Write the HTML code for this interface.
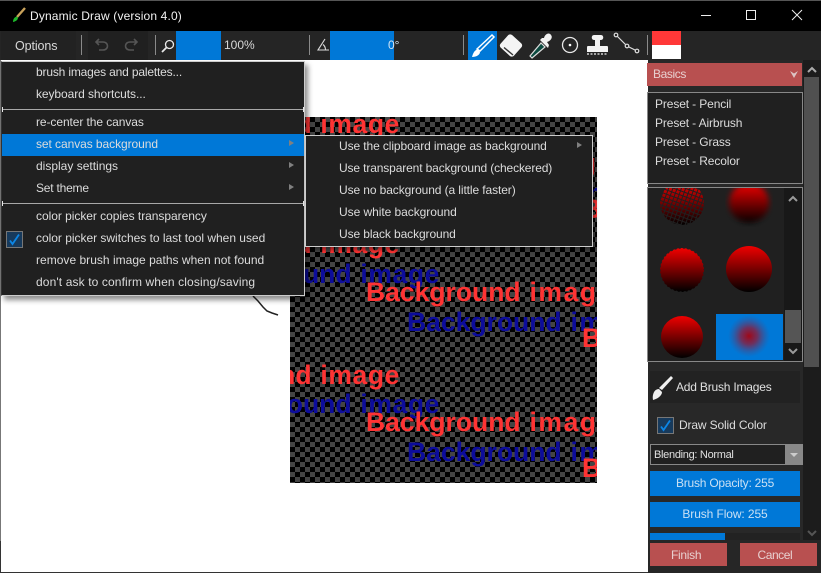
<!DOCTYPE html>
<html><head><meta charset="utf-8">
<style>
*{box-sizing:border-box}
html,body{margin:0;padding:0;width:821px;height:573px;overflow:hidden;background:#fff}
body{position:relative;font-family:"Liberation Sans",sans-serif;font-size:12px;color:#d8d8d8}
.a{position:absolute}
.t{position:absolute;white-space:nowrap;line-height:16px;height:16px}
.m{font-size:12px;color:#dcdcdc;letter-spacing:-.08px}
.s{letter-spacing:-.1px}
.p{letter-spacing:-.12px}
.big{position:absolute;white-space:nowrap;font-weight:bold;font-size:26.5px;line-height:30px;height:30px;word-spacing:1.5px}
.big i{font-style:normal;letter-spacing:.6px}
.big.w i{letter-spacing:1.6px}
.r{color:#ff3333}.b{color:#0c0c9c}
.arr{position:absolute;width:0;height:0;border-left:5px solid #808080;border-top:3.5px solid transparent;border-bottom:3.5px solid transparent}
.sep{position:absolute;width:1px;height:20px;background:#8a8a8a;top:35px}
.tick{position:absolute;width:1px;height:5px;background:#e8e8e8}
svg{position:absolute;overflow:visible}
</style></head><body>
<div class="a" style="left:0;top:0;width:821px;height:31px;background:#000"></div>
<div class="a" style="left:0;top:0;width:821px;height:1px;background:#555"></div>
<svg style="left:10px;top:7px" width="16" height="16" viewBox="0 0 16 16"><path d="M7 10L15 1" stroke="#c9a25a" stroke-width="2.4"/><path d="M3 15C3 12 5 9 7.5 10C9 12 6 14.5 3 15Z" fill="#1db92a"/></svg>
<div class="t" style="left:30px;top:8px;color:#f2f2f2;font-size:12px;letter-spacing:.15px">Dynamic Draw (version 4.0)</div>
<svg style="left:701px;top:10px" width="110" height="12" viewBox="0 0 110 12"><path d="M0 5.5H10" stroke="#eee" stroke-width="1"/><rect x="45.500" y=".5" width="9" height="9" fill="none" stroke="#eee"/><path d="M91 0L101 10M101 0L91 10" stroke="#eee"/></svg>

<!-- toolbar -->
<div class="a" style="left:0;top:31px;width:821px;height:29px;background:#252525"></div>
<div class="a" style="left:1px;top:31px;width:75px;height:29px;background:#222"></div>
<div class="t" style="left:15px;top:38px;color:#d8d8d8;font-size:12.5px;letter-spacing:-.1px">Options</div>
<div class="sep" style="left:81px"></div>
<div class="sep" style="left:155px"></div>
<div class="a" style="left:88px;top:31px;width:60px;height:29px;background:#202020"></div>
<svg style="left:95px;top:38px" width="45" height="14" viewBox="0 0 45 14" fill="none" stroke="#555" stroke-width="1.6"><path d="M1 4H8C14 4 14 12 8 12H4M4 1L1 4L4 7"/><path d="M42 4H35C29 4 29 12 35 12H39M39 1L42 4L39 7"/></svg>
<svg style="left:161px;top:39px" width="14" height="14" viewBox="0 0 14 14" fill="none" stroke="#e8e8e8" stroke-width="1.3"><circle cx="8.5" cy="5.5" r="4"/><path d="M5.5 8.5L1 13" stroke-width="1.8"/></svg>
<div class="a" style="left:176px;top:31px;width:45px;height:29px;background:#0078d7"></div>
<div class="t" style="left:224px;top:37px;color:#d8d8d8">100%</div>
<div class="sep" style="left:309px"></div>
<svg style="left:316px;top:38px" width="14" height="14" viewBox="0 0 14 14" fill="none" stroke="#ddd" stroke-width="1.1"><path d="M9 1L2 12H13M7 6.5C9 8 9.5 10 9.5 12"/></svg>
<div class="a" style="left:330px;top:31px;width:64px;height:29px;background:#0078d7"></div>
<div class="t" style="left:388px;top:37px;color:#cfe4f5">0°</div>
<div class="sep" style="left:463px"></div>
<div class="a" style="left:468px;top:31px;width:29px;height:29px;background:#0078d7"></div>
<svg style="left:468px;top:31px" width="29" height="29" viewBox="0 0 29 29"><path d="M9 18L24 4L26 6L12 20Z" fill="none" stroke="#fff" stroke-width="1.5"/><path d="M4 26C5 22 7 18 10 19L12 21C12 24 8 26 4 26Z" fill="#fff"/></svg>
<svg style="left:498px;top:31px" width="28" height="29" viewBox="0 0 28 29"><rect x="4" y="6" width="18" height="17" rx="3" fill="#f4f4f4" transform="rotate(42 13 14.5)"/><path d="M6 16.500L15 24" stroke="#333" stroke-width="1.400"/></svg>
<svg style="left:528px;top:31px" width="26" height="29" viewBox="0 0 26 29"><path d="M4 27L2 25L13 12L17 16Z" fill="#0c4a40" stroke="#ddd" stroke-width="1.2"/><path d="M12 9L20 17L21 14L19 11C23 10 25 6 23 4C21 1 17 3 16 7L14 7Z" fill="#f2f2f2"/></svg>
<svg style="left:558px;top:33px" width="24" height="24" viewBox="0 0 24 24"><circle cx="12" cy="12" r="7.500" fill="none" stroke="#e8e8e8" stroke-width="1.3"/><circle cx="12" cy="12" r="1.300" fill="#fff"/></svg>
<svg style="left:586px;top:33px" width="24" height="24" viewBox="0 0 24 24" fill="#f4f4f4"><path d="M8 2H15C18 2 18 7 15 7H14V13H21C22 13 22 14 22 15V19H1V15C1 14 1 13 2 13H9V7H8C5 7 5 2 8 2Z"/><path d="M1 21H22" stroke="#f4f4f4" stroke-width="1.200" stroke-dasharray="2 1.500"/></svg>
<svg style="left:613px;top:32px" width="28" height="22" viewBox="0 0 28 22" fill="none" stroke="#ddd" stroke-width="1.200"><path d="M3 3L14 14L24 19"/><circle cx="3" cy="3" r="1.800" fill="#252525"/><circle cx="14" cy="14" r="1.800" fill="#252525"/><circle cx="24" cy="19" r="1.800" fill="#252525"/></svg>
<div class="sep" style="left:647px"></div>
<div class="a" style="left:652px;top:31px;width:29px;height:14px;background:#ff3838"></div>
<div class="a" style="left:652px;top:45px;width:29px;height:14px;background:#fff"></div>

<!-- canvas -->
<div class="a" style="left:0;top:60px;width:648px;height:513px;background:#fff;border-left:1px solid #777;border-bottom:1px solid #333"></div>
<div class="a" style="left:0;top:541px;width:1px;height:32px;background:#333"></div>
<div class="a" id="c" style="left:290px;top:117px;width:307px;height:366px;overflow:hidden;background-color:#000;background-image:linear-gradient(45deg,#444 25%,transparent 25%,transparent 75%,#444 75%),linear-gradient(45deg,#444 25%,transparent 25%,transparent 75%,#444 75%);background-size:10px 10px;background-position:0 0,5px 5px">
<div class="big r" style="right:197px;top:-8px">Background <i>image</i></div>
<div class="big r w" style="left:76px;top:31px">Background <i>image</i></div>
<div class="big b w" style="left:117px;top:61px">Background <i>image</i></div>
<div class="big r" style="left:292px;top:77px">Background <i>image</i></div>
<div class="big r" style="right:197px;top:112px">Background <i>image</i></div>
<div class="big b" style="right:157px;top:142px">Background <i>image</i></div>
<div class="big r w" style="left:76px;top:160px">Background <i>image</i></div>
<div class="big b w" style="left:117px;top:190px">Background <i>image</i></div>
<div class="big r" style="left:292px;top:206px">Background <i>image</i></div>
<div class="big r" style="right:197px;top:243px">Background <i>image</i></div>
<div class="big b" style="right:157px;top:272px">Background <i>image</i></div>
<div class="big r w" style="left:76px;top:290px">Background <i>image</i></div>
<div class="big b w" style="left:117px;top:320px">Background <i>image</i></div>
<div class="big r" style="left:292px;top:336px">Background <i>image</i></div>
</div>
<svg style="left:250px;top:294px" width="32" height="24" viewBox="0 0 32 24"><path d="M3 2L8 7L13 13L17 17L22 19L28 21" fill="none" stroke="#222" stroke-width="1.500"/></svg>

<!-- menu -->
<div class="a" style="left:1px;top:61px;width:304px;height:235px;background:#202020;border:1px solid #ccc;border-left:1px solid #333;box-shadow:3px 4px 5px rgba(0,0,0,.45)"></div>
<div class="a" style="left:2px;top:109px;width:302px;height:1px;background:#a8a8a8"></div>
<div class="a" style="left:2px;top:203px;width:302px;height:1px;background:#a8a8a8"></div>
<div class="tick" style="left:2px;top:107px"></div><div class="tick" style="left:303px;top:107px"></div>
<div class="tick" style="left:2px;top:201px"></div><div class="tick" style="left:303px;top:201px"></div>
<div class="a" style="left:2px;top:134px;width:302px;height:22px;background:#0078d7"></div>
<div class="t m" style="left:36px;top:64px;letter-spacing:-.17px">brush images and palettes...</div>
<div class="t m" style="left:36px;top:86px">keyboard shortcuts...</div>
<div class="t m" style="left:36px;top:114px">re-center the canvas</div>
<div class="t m" style="left:36px;top:136px;letter-spacing:-.07px">set canvas background</div>
<div class="t m" style="left:36px;top:158px;letter-spacing:0">display settings</div>
<div class="t m" style="left:36px;top:180px;letter-spacing:-.21px">Set theme</div>
<div class="t m" style="left:36px;top:208px;letter-spacing:-.04px">color picker copies transparency</div>
<div class="t m" style="left:36px;top:230px;letter-spacing:-.02px">color picker switches to last tool when used</div>
<div class="t m" style="left:36px;top:252px;letter-spacing:.02px">remove brush image paths when not found</div>
<div class="t m" style="left:36px;top:274px;letter-spacing:.12px">don't ask to confirm when closing/saving</div>
<div class="arr" style="left:289px;top:140px"></div>
<div class="arr" style="left:289px;top:162px"></div>
<div class="arr" style="left:289px;top:184px"></div>
<div class="a" style="left:6px;top:231px;width:17px;height:17px;background:#173a5c;border:1px solid #777"></div>
<svg style="left:6px;top:231px" width="17" height="17" viewBox="0 0 17 17"><path d="M4 9.500L6.500 13L13 3.500" fill="none" stroke="#0c86e6" stroke-width="1.800"/></svg>

<!-- submenu -->
<div class="a" style="left:305px;top:135px;width:288px;height:112px;background:#202020;border:1px solid #ccc;box-shadow:2px 3px 4px rgba(0,0,0,.4)"></div>
<div class="t m s" style="left:339px;top:138px">Use the clipboard image as background</div>
<div class="t m s" style="left:339px;top:160px;letter-spacing:-.13px">Use transparent background (checkered)</div>
<div class="t m s" style="left:339px;top:182px">Use no background (a little faster)</div>
<div class="t m s" style="left:339px;top:204px;letter-spacing:-.05px">Use white background</div>
<div class="t m s" style="left:339px;top:226px">Use black background</div>
<div class="arr" style="left:577px;top:142px"></div>

<!-- right panel -->
<div class="a" style="left:648px;top:60px;width:173px;height:513px;background:#282828"></div>
<div class="a" style="left:803px;top:60px;width:18px;height:480px;background:#1c1c1c"></div>
<div class="a" style="left:804px;top:77px;width:15px;height:290px;background:#505050"></div>
<svg style="left:805px;top:62px" width="14" height="480" viewBox="0 0 14 480" fill="none" stroke="#aaa" stroke-width="2"><path d="M3 10L7 6L11 10"/><path d="M3 469L7 473L11 469" stroke="#555"/></svg>

<div class="a" style="left:647px;top:63px;width:155px;height:23px;background:#b85050"></div>
<div class="t" style="left:653px;top:66px;color:#e8d0d0;letter-spacing:-.4px">Basics</div>
<svg style="left:788px;top:70px" width="12" height="10" viewBox="0 0 12 10"><path d="M2 1L6 3.500L10 1L6 8Z" fill="#ddc4c4"/></svg>

<div class="a" style="left:647px;top:92px;width:156px;height:92px;background:#202020;border:1px solid #888"></div>
<div class="t m p" style="left:655px;top:96px">Preset - Pencil</div>
<div class="t m p" style="left:655px;top:115px">Preset - Airbrush</div>
<div class="t m p" style="left:655px;top:134px">Preset - Grass</div>
<div class="t m p" style="left:655px;top:153px">Preset - Recolor</div>

<div class="a" style="left:647px;top:187px;width:156px;height:175px;background:#202020;border:1px solid #888;overflow:hidden">
 <div class="a" style="left:136px;top:0;width:18px;height:173px;background:#181818"></div>
 <div class="a" style="left:137px;top:122px;width:16px;height:33px;background:#555"></div>
 <svg style="left:136px;top:0" width="18" height="173" viewBox="0 0 18 173" fill="none" stroke="#999" stroke-width="2"><path d="M5 13L9 9L13 13"/><path d="M5 161L9 165L13 161"/></svg>
 <div class="a" style="left:68px;top:126px;width:67px;height:46px;background:#0078d7"></div>
 <svg style="left:0;top:0" width="136" height="173" viewBox="0 0 136 173">
  <defs>
   <linearGradient id="g" x1="0" y1="0" x2="0" y2="1"><stop offset="0" stop-color="#f00000"/><stop offset="1" stop-color="#000"/></linearGradient>
   <radialGradient id="f"><stop offset="0" stop-color="#a00818"/><stop offset=".4" stop-color="#7a2850" stop-opacity=".9"/><stop offset="1" stop-color="#405090" stop-opacity="0"/></radialGradient>
   <pattern id="dots" width="4" height="4" patternUnits="userSpaceOnUse" patternTransform="rotate(20)"><rect x="0" y="0" width="3" height="3" fill="#fff"/></pattern>
   <mask id="dm"><circle cx="34" cy="15" r="22" fill="url(#dots)"/></mask>
   <filter id="bl"><feGaussianBlur stdDeviation="3"/></filter>
  </defs>
  <circle cx="34" cy="15" r="22" fill="url(#g)" mask="url(#dm)"/>
  <circle cx="101" cy="15" r="20" fill="url(#g)" filter="url(#bl)"/>
  <circle cx="34" cy="82" r="21.500" fill="url(#g)" stroke="url(#g)" stroke-dasharray="2 2" stroke-width="1"/>
  <circle cx="101" cy="81" r="23" fill="url(#g)"/>
  <circle cx="34" cy="149" r="21" fill="url(#g)"/>
  <circle cx="101" cy="148" r="21" fill="url(#f)"/>
 </svg>
</div>

<div class="a" style="left:650px;top:371px;width:150px;height:32px;background:#222"></div>
<svg style="left:651px;top:375px" width="24" height="26" viewBox="0 0 24 26"><path d="M20 1L22 3L11 15L8 13Z" fill="#f0f0f0"/><path d="M2 25C1 20 3 14 8 14L11 17C11 21 6 24 2 25Z" fill="#f0f0f0"/></svg>
<div class="t" style="left:676px;top:379px;color:#e0e0e0;font-size:12px;letter-spacing:-.2px">Add Brush Images</div>
<div class="a" style="left:657px;top:417px;width:17px;height:17px;background:#173a5c;border:1px solid #777"></div>
<svg style="left:657px;top:417px" width="17" height="17" viewBox="0 0 17 17"><path d="M4 9.500L6.500 13L13 3.500" fill="none" stroke="#0c86e6" stroke-width="1.800"/></svg>
<div class="t" style="left:679px;top:417px;color:#dcdcdc;font-size:12px;letter-spacing:-.14px">Draw Solid Color</div>
<div class="a" style="left:650px;top:444px;width:153px;height:21px;background:#202020;border:1px solid #888"></div>
<div class="a" style="left:785px;top:444px;width:18px;height:21px;background:#888"></div>
<div class="a" style="left:790px;top:453px;width:0;height:0;border-top:4px solid #ccc;border-left:4px solid transparent;border-right:4px solid transparent"></div>
<div class="t" style="left:654px;top:447px;color:#e0e0e0;font-size:11px;letter-spacing:-.3px">Blending: Normal</div>
<div class="a" style="left:650px;top:471px;width:150px;height:25px;background:#0078d7"></div>
<div class="t" style="left:650px;width:150px;text-align:center;top:475px;color:#c8e0f4;font-size:12px;letter-spacing:-.22px">Brush Opacity: 255</div>
<div class="a" style="left:650px;top:502px;width:150px;height:25px;background:#0078d7"></div>
<div class="t" style="left:650px;width:150px;text-align:center;top:506px;color:#c8e0f4;font-size:12px;letter-spacing:-.1px">Brush Flow: 255</div>
<div class="a" style="left:650px;top:533px;width:150px;height:7px;background:#222"></div>
<div class="a" style="left:650px;top:533px;width:75px;height:7px;background:#0078d7"></div>
<div class="a" style="left:648px;top:540px;width:173px;height:33px;background:#262626"></div>
<div class="a" style="left:650px;top:543px;width:77px;height:23px;background:#b85050"></div>
<div class="t" style="left:671px;top:547px;color:#e8d0d0;font-size:12px;letter-spacing:-.3px">Finish</div>
<div class="a" style="left:740px;top:543px;width:77px;height:23px;background:#b85050"></div>
<div class="t" style="left:757.500px;top:547px;color:#e8d0d0;font-size:12px;letter-spacing:-.45px">Cancel</div>
</body></html>
